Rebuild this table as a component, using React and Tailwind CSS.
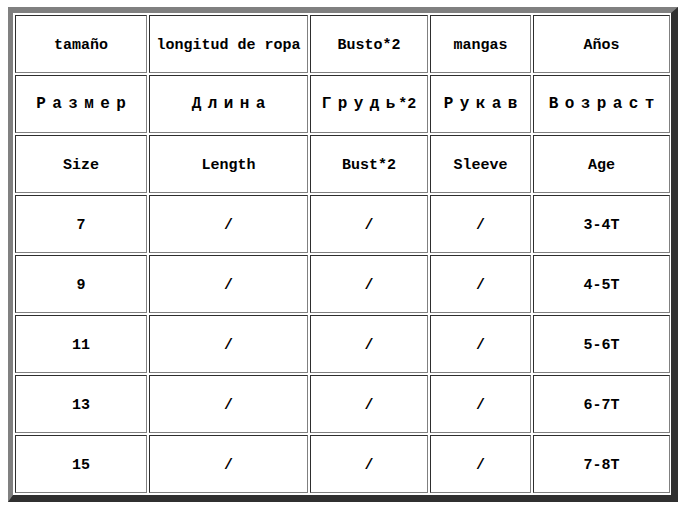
const COLS = ['tamaño', 'longitud de ropa', 'Busto*2', 'mangas', 'Años'];

const RU = [
  ['Размер', ''],
  ['Длина', ''],
  ['Грудь', '*2'],
  ['Рукав', ''],
  ['Возраст', ''],
];

const EN = ['Size', 'Length', 'Bust*2', 'Sleeve', 'Age'];

const SIZES = [
  ['7', '3-4T'],
  ['9', '4-5T'],
  ['11', '5-6T'],
  ['13', '6-7T'],
  ['15', '7-8T'],
];

function Cell({ children, low = true }) {
  return (
    <div className={`flex items-center justify-center border border-t-[#2e2e2e] border-l-[#2e2e2e] border-b-[#808080] border-r-[#808080] bg-white whitespace-nowrap ${low ? 'pt-[4px]' : 'pt-0'}`}>
      {children}
    </div>
  );
}

export default function App() {
  return (
    <div className="min-h-[509px] bg-white pl-[8px] pt-[7px]" style={{ fontFamily: '"Liberation Mono", "DejaVu Sans Mono", monospace' }}>
      <div className="w-[670px] border-t-[6px] border-l-[5px] border-r-[7px] border-b-[7px] border-t-[#808080] border-l-[#808080] border-r-[#303030] border-b-[#303030]">
        <div className="grid grid-cols-[132px_159px_118px_101px_137px] auto-rows-[58px] gap-[2px] p-[2px] text-[15px] font-bold text-black">
          {COLS.map(c => <Cell key={c}>{c}</Cell>)}
          {RU.map(([ru, rest]) => (
            <Cell key={ru} low={false}>
              <span className="inline-flex items-baseline text-[16px] font-semibold">
                <span className="tracking-[6.4px]">{ru.slice(0, -1)}</span>
                <span className={rest ? 'tracking-[3px]' : ''}>{ru.slice(-1)}</span>
                {rest && <span className="text-[15px]">{rest}</span>}
              </span>
            </Cell>
          ))}
          {EN.map(c => <Cell key={c}>{c}</Cell>)}
          {SIZES.map(([size, age]) => (
            <div key={size} className="contents">
              <Cell>{size}</Cell>
              <Cell>/</Cell>
              <Cell>/</Cell>
              <Cell>/</Cell>
              <Cell>{age}</Cell>
            </div>
          ))}
        </div>
      </div>
    </div>
  );
}
